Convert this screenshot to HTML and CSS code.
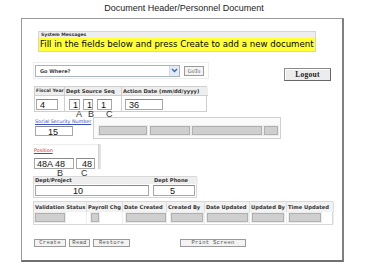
FILE: index.html
```html
<!DOCTYPE html>
<html>
<head>
<meta charset="utf-8">
<link rel="stylesheet" href="styles.css">
</head>
<body>
<div class="title">Document Header/Personnel Document</div>
<div class="frame">
  <div class="sys">
    <div class="sys-h">System Messages</div>
    <div class="sys-b">Fill in the fields below and press Create to add a new document</div>
  </div>

  <div class="go-row">
    <div class="go-panel">
      <div class="select"><span class="sel-text">Go Where?</span><span class="sel-arrow"><svg width="7" height="5" viewBox="0 0 7 5"><path d="M1 1 L3.5 3.5 L6 1" fill="none" stroke="#3f63b0" stroke-width="1.4"/></svg></span></div>
      <div class="btn goto">GoTo</div>
    </div>
    <div class="logout">Logout</div>
  </div>

  <div class="fiscal">
    <div class="th c-fy">Fiscal Year</div>
    <div class="th c-ds">Dept Source Seq</div>
    <div class="th c-ad">Action Date (mm/dd/yyyy)</div>
    <div class="td c-fy"><div class="inp w-fy">4</div></div>
    <div class="td c-ds ds-cell"><div class="inp w-d1">1</div><div class="inp w-d2">1</div><div class="inp w-d3">1</div></div>
    <div class="td c-ad ad-cell"><div class="inp w-ad">36</div></div>
  </div>

  <div class="ssn">
    <div class="ssn-left">
      <a class="link blue">Social Security Number</a>
      <div class="inp w-ssn">15</div>
    </div>
    <div class="ssn-right">
      <div class="ginp g1"></div>
      <div class="ginp g2"></div>
      <div class="ginp g3"></div>
      <div class="ginp g4"></div>
    </div>
  </div>

  <div class="pos">
    <div class="pos-left">
      <a class="link red">Position</a>
      <div class="pos-inputs">
        <div class="inp w-p1">48A 48</div>
        <div class="inp w-p2">48</div>
      </div>
    </div>
    <div class="pos-sep"></div>
  </div>

  <div class="dept">
    <div class="dh dp-col">Dept/Project</div>
    <div class="dh ph-col">Dept Phone</div>
    <div class="dd dp-col"><div class="inp w-dp">10</div></div>
    <div class="dd ph-col"><div class="inp w-ph">5</div></div>
  </div>

  <div class="valid">
    <div class="vh">Validation Status</div>
    <div class="vh">Payroll Chg</div>
    <div class="vh">Date Created</div>
    <div class="vh">Created By</div>
    <div class="vh">Date Updated</div>
    <div class="vh">Updated By</div>
    <div class="vh">Time Updated</div>
    <div class="vd"><div class="ginp v1"></div></div>
    <div class="vd pc"><div class="ginp v2"></div></div>
    <div class="vd dc"><div class="ginp v3"></div></div>
    <div class="vd cb"><div class="ginp v4"></div></div>
    <div class="vd du"><div class="ginp v5"></div></div>
    <div class="vd ub"><div class="ginp v6"></div></div>
    <div class="vd tu"><div class="ginp v7"></div></div>
  </div>

  <div class="buttons">
    <div class="btn b-create">Create</div>
    <div class="btn b-read">Read</div>
    <div class="btn b-restore">Restore</div>
    <div class="btn b-print">Print Screen</div>
  </div>

  <span class="note n-a">A</span>
  <span class="note n-b">B</span>
  <span class="note n-c">C</span>
  <span class="note n-b2">B</span>
  <span class="note n-c2">C</span>
</div>
</body>
</html>
```
FILE: styles.css
```css
* { box-sizing: border-box; }
body {
  margin: 0;
  background: #fff;
  font-family: "Liberation Sans", Arial, sans-serif;
  color: #111;
}
.title {
  height: 18px;
  line-height: 16px;
  font-size: 9px;
  text-align: center;
  color: #222;
}
.frame {
  position: relative;
  margin-left: 21px;
  width: 323px;
  height: 244px;
  border-top: 1px solid #999;
  border-left: 1px solid #999;
  border-right: 2px solid #808080;
  border-bottom: 2px solid #707070;
}

/* system messages */
.sys {
  margin: 12px 0 0 16px;
  width: 278px;
  border: 1px solid #d4d4d4;
}
.sys-h {
  height: 6px;
  background: #eeeeee;
  font-family: "DejaVu Sans", Verdana, sans-serif;
  font-weight: bold;
  font-size: 4.5px;
  line-height: 6px;
  padding-left: 2px;
  color: #333;
}
.sys-b {
  height: 13px;
  background: #ffff33;
  font-family: "DejaVu Sans", Verdana, sans-serif;
  font-size: 8.6px;
  line-height: 13px;
  padding-left: 1px;
  white-space: nowrap;
  overflow: hidden;
  color: #000;
}

/* go row */
.go-row {
  display: flex;
  margin-top: 10px;
  height: 19px;
}
.go-panel {
  margin-left: 11px;
  width: 176px;
  height: 17px;
  border: 1px solid #ececec;
  display: flex;
  align-items: center;
  padding-left: 1px;
}
.select {
  width: 145px;
  height: 12px;
  border: 1px solid #a9b3c0;
  background: #fff;
  display: flex;
  align-items: center;
  justify-content: space-between;
}
.sel-text {
  font-family: "DejaVu Sans", Verdana, sans-serif;
  font-size: 5px;
  font-weight: bold;
  color: #444;
  padding-left: 4px;
}
.sel-arrow {
  width: 10px;
  height: 10px;
  background: #e4ebf5;
  border-left: 1px solid #d0d8e4;
  display: flex;
  align-items: center;
  justify-content: center;
}
.btn {
  height: 8px;
  border: 1px solid #9a9a9a;
  background: #f3f3f3;
  font-family: "Liberation Mono", "Courier New", monospace;
  font-size: 5.5px;
  line-height: 6px;
  color: #555;
  display: flex;
  align-items: center;
  justify-content: center;
  letter-spacing: 0.3px;
}
.goto {
  margin-left: 4px;
  width: 20px;
  height: 10px;
  font-family: "Liberation Serif", serif;
  font-size: 5.5px;
  letter-spacing: 0;
}
.logout {
  margin-left: auto;
  margin-right: 11px;
  margin-top: 6px;
  width: 47px;
  height: 13px;
  border: 1px solid #8a8a8a;
  border-right-color: #666;
  border-bottom-color: #666;
  background: #ececec;
  box-shadow: inset 1px 1px 0 #fff;
  font-family: "Liberation Serif", serif;
  font-weight: bold;
  font-size: 7.5px;
  display: flex;
  align-items: center;
  justify-content: center;
  color: #222;
  letter-spacing: 0.3px;
}

/* inputs */
.inp {
  height: 11px;
  border: 1px solid #a8a8a8;
  border-top-color: #8a8a8a;
  background: #fff;
  font-size: 9px;
  line-height: 10px;
  padding-left: 3px;
  color: #111;
  white-space: nowrap;
}
.ginp {
  height: 9px;
  border: 1px solid #b0b0b0;
  background: #cfcfcf;
  box-shadow: 0 0 0 1px #ececec;
}

/* fiscal table */
.fiscal {
  margin: 5px 0 0 12px;
  width: 173px;
  display: grid;
  grid-template-columns: 30px 57px 86px;
  grid-template-rows: 9px 15px;
  border: 1px solid #cfcfcf;
}
.th {
  background: #eeeeee;
  border-right: 1px solid #d0d0d0;
  border-bottom: 1px solid #d0d0d0;
  font-family: "DejaVu Sans", Verdana, sans-serif;
  font-weight: bold;
  font-size: 5.2px;
  line-height: 8px;
  padding-left: 1px;
  white-space: nowrap;
  color: #333;
}
.th.c-fy { font-size: 4.6px; }
.td {
  border-right: 1px solid #d0d0d0;
  padding-top: 3px;
  display: flex;
}
.c-ad { border-right: none; }
.w-fy { width: 22px; margin-left: 1px; }
.ds-cell { padding-left: 4px; }
.w-d1 { width: 11px; }
.w-d2 { width: 10px; margin-left: 3px; }
.w-d3 { width: 15px; margin-left: 4px; }
.ad-cell { padding-left: 3px; }
.w-ad { width: 38px; }

/* SSN */
.ssn {
  display: flex;
  margin: 5px 0 0 11px;
  height: 22px;
}
.ssn-left {
  width: 60px;
  padding: 2px 0 0 2px;
}
.link {
  display: block;
  font-family: "DejaVu Sans", Verdana, sans-serif;
  font-size: 4.8px;
  line-height: 6px;
  text-decoration: underline;
  white-space: nowrap;
}
.blue { color: #3a4fc0; }
.red { color: #d02020; }
.w-ssn { width: 38px; height: 10px; margin-top: 1px; padding-left: 12px; }
.ssn-right {
  width: 188px;
  border: 1px solid #d0d0d0;
  background: #fafafa;
  display: flex;
  padding: 8px 0 0 5px;
}
.g1 { width: 48px; }
.g2 { width: 40px; margin-left: 3px; }
.g3 { width: 70px; margin-left: 2px; }
.g4 { width: 14px; margin-left: 2px; }

/* position */
.pos {
  display: flex;
  margin: 5px 0 0 11px;
  height: 25px;
}
.pos-left {
  width: 65px;
  padding: 3px 0 0 1px;
  border-top: 1px solid #eee;
}
.pos-inputs {
  display: flex;
  margin-top: 4px;
}
.w-p1 { width: 40px; padding-left: 2px; }
.w-p2 { width: 19px; margin-left: 2px; padding-left: 5px; }
.pos-sep {
  width: 3px;
  background: #e2e2e2;
  border-left: 1px solid #d0d0d0;
}

/* dept */
.dept {
  margin: 7px 0 0 11px;
  width: 164px;
  display: grid;
  grid-template-columns: 118px 46px;
  grid-template-rows: 7px 13px;
  border: 1px solid #d8d8d8;
}
.dh {
  background: #eeeeee;
  font-family: "DejaVu Sans", Verdana, sans-serif;
  font-weight: bold;
  font-size: 5.2px;
  line-height: 7px;
  padding-left: 1px;
  color: #333;
}
.ph-col.dh { padding-left: 2px; }
.dd { padding-top: 1px; }
.dp-col.dd { padding-left: 1px; }
.ph-col.dd { padding-left: 1px; }
.w-dp { width: 114px; padding-left: 37px; }
.w-ph { width: 42px; padding-left: 16px; }

/* validation */
.valid {
  margin: 3px 0 0 11px;
  width: 300px;
  display: grid;
  grid-template-columns: 53px 36px 44px 38px 45px 37px 47px;
  grid-template-rows: 10px 12px;
  border: 1px solid #d8d8d8;
}
.vh {
  background: #f2f2f2;
  border-right: 1px solid #ddd;
  font-family: "DejaVu Sans", Verdana, sans-serif;
  font-weight: bold;
  font-size: 5.2px;
  line-height: 10px;
  padding-left: 1px;
  white-space: nowrap;
  color: #333;
}
.vh:last-of-type { border-right: none; }
.vd { padding: 1px 0 0 1px; border-right: 1px solid #eee; }
.v1 { width: 30px; }
.pc { padding-left: 4px; }
.v2 { width: 8px; }
.dc { padding-left: 3px; }
.v3 { width: 40px; }
.cb { padding-left: 4px; }
.v4 { width: 32px; }
.du { padding-left: 2px; }
.v5 { width: 41px; }
.ub { padding-left: 2px; }
.v6 { width: 32px; }
.tu { padding-left: 2px; }
.v7 { width: 32px; }

/* buttons */
.buttons {
  display: flex;
  margin: 14px 0 0 12px;
}
.b-create { width: 32px; }
.b-read { width: 21px; margin-left: 3px; }
.b-restore { width: 37px; margin-left: 3px; }
.b-print { width: 66px; margin-left: 50px; }

/* annotations */
.note {
  position: absolute;
  font-size: 9px;
  line-height: 7px;
  color: #333;
}
.n-a { left: 54px; top: 92px; }
.n-b { left: 66px; top: 92px; }
.n-c { left: 84px; top: 92px; }
.n-b2 { left: 35px; top: 151px; }
.n-c2 { left: 59px; top: 151px; }
```
